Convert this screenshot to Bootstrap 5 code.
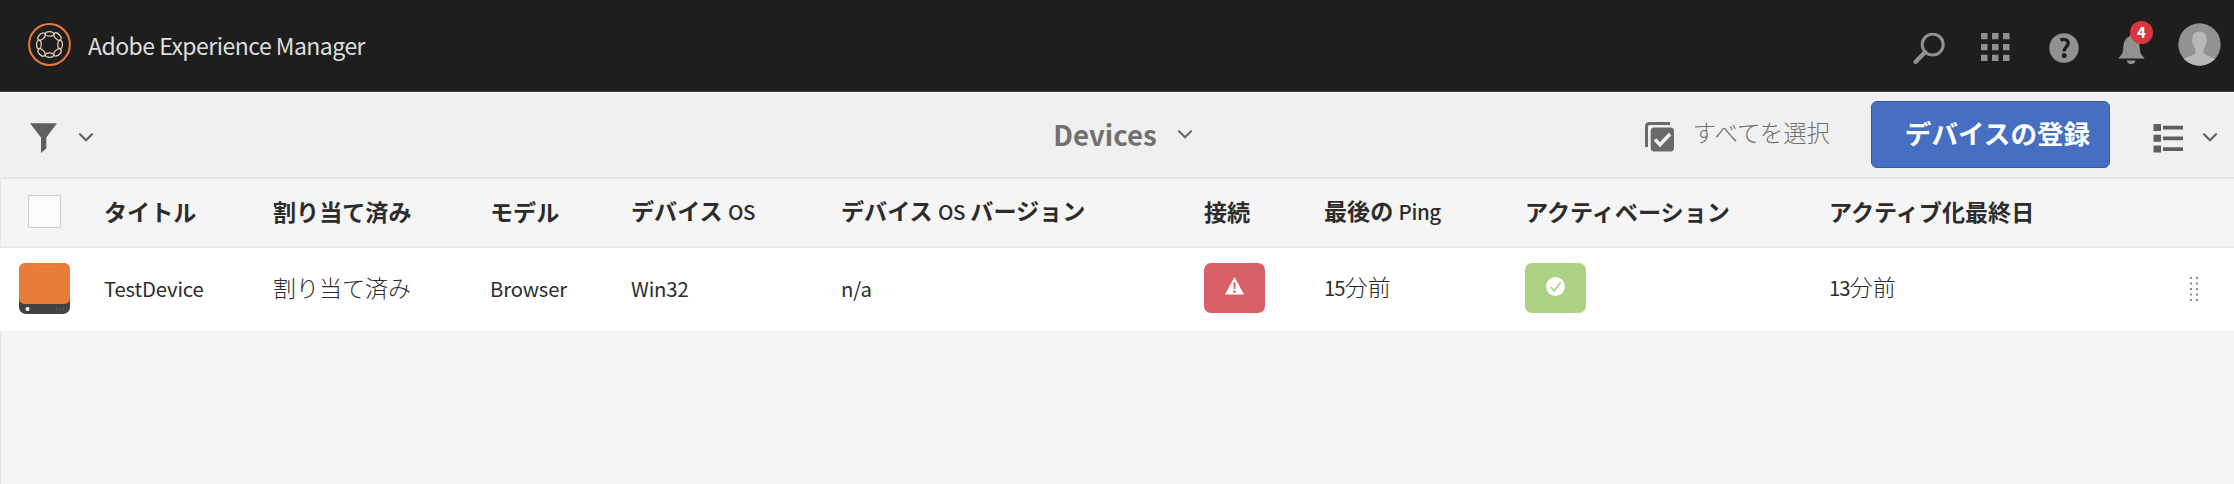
<!DOCTYPE html>
<html lang="ja">
<head>
<meta charset="utf-8">
<meta name="viewport" content="width=device-width, initial-scale=1">
<title>Adobe Experience Manager - Devices</title>
<link href="https://cdn.jsdelivr.net/npm/bootstrap@5.3.0/dist/css/bootstrap.min.css" rel="stylesheet">
<style>
body{font-family:"Noto Sans CJK JP",sans-serif;font-size:23px;line-height:34px;background:#f5f5f5;color:#2c2c2c;height:484px;overflow:hidden}
svg{display:block;flex:none}
.shell-bar{height:93px;background:#1e1e1e;border-bottom:1px solid #fff;box-shadow:inset 0 -1px #3a3a3a;padding:0 13px 0 28px}
.shell-title{font-size:23px;color:#dedede;margin:-2px 0 0 17px;letter-spacing:-.52px;white-space:nowrap}
.shell-tools{color:#919191}
.count-badge{left:12px;top:-6px;width:23px;height:23px;background:#d7373f;font-size:15px;line-height:22px;padding:0;font-weight:700}
.action-bar{height:86px;background:#f0f0f0;border-bottom:2px solid #e5e5e5;color:#5f5f5f}
.bar-side{flex:1 1 0}
.page-title{font-size:27.6px;font-weight:700;color:#707070;line-height:40px;margin-top:-2px}
.select-all{font-size:23.4px;font-weight:300;color:#707070;white-space:nowrap;margin:-6px 41px 0 0}
.btn-register{width:239px;height:67px;margin:-2px 43px 0 0;background:#466ec1;border:1px solid #2f5bb8;border-radius:6px;color:#fff;font-size:26.6px;font-weight:700;line-height:40px;padding:0 0 2px 14px;white-space:nowrap}
.device-table{table-layout:fixed;width:2234px;margin:0 0 0 -1px;white-space:nowrap}
.device-table th,.device-table td{padding:0;vertical-align:middle}
.device-table thead tr{height:68px}
.device-table th{font-size:23.1px;font-weight:700;border-bottom:2px solid #e9e9e9;padding-bottom:4px}
.device-table tbody tr{height:84px}
.device-table td{background:#fff;padding-bottom:4px}
.device-table .jp-light{font-weight:300;padding-bottom:6px}
.latin{font-size:20.3px;letter-spacing:-.15px}
th .latin{font-size:20.5px;letter-spacing:-.4px;font-weight:500}
.jp-light .latin{font-weight:400;letter-spacing:-.9px}
.check-all{width:33px;height:33px;border:1px solid #cfcfcf;background:#fbfbfb;margin:2px 0 0 28px}
.status-tag{width:61px;height:50px;border-radius:7px;padding-bottom:3px;margin-left:-.5px}
.status-alert{background:#d96066}
.status-ok{background:#aed082}
.list-area{border-left:1px solid #e6e6e6;height:305px}
</style>
</head>
<body>
<header class="shell-bar d-flex align-items-center">
  <svg width="43" height="43" viewBox="-21.5 -21.5 43 43" fill="none" style="margin-top:-3px">
    <circle r="20.4" stroke="#e87b3c" stroke-width="2"/>
    <g stroke="#e6cdbd" stroke-width="1.3">
      <ellipse cy="-10.6" rx="4.2" ry="2.3"/>
      <ellipse cy="-11.3" rx="4.4" ry="2.6" transform="rotate(45)"/>
      <ellipse cy="-10.6" rx="4.2" ry="2.3" transform="rotate(90)"/>
      <ellipse cy="-11.3" rx="4.4" ry="2.6" transform="rotate(135)"/>
      <ellipse cy="-10.6" rx="4.2" ry="2.3" transform="rotate(180)"/>
      <ellipse cy="-11.3" rx="4.4" ry="2.6" transform="rotate(225)"/>
      <ellipse cy="-10.6" rx="4.2" ry="2.3" transform="rotate(270)"/>
      <ellipse cy="-11.3" rx="4.4" ry="2.6" transform="rotate(315)"/>
    </g>
  </svg>
  <span class="shell-title">Adobe Experience Manager</span>
  <div class="shell-tools d-flex align-items-center ms-auto">
    <svg width="32" height="32" viewBox="0 0 32 32" fill="none" stroke="currentColor" style="margin:5px 36px 0 0"><circle cx="19.7" cy="11.6" r="10.5" stroke-width="3"/><path d="M12 19.2 2.7 28.8" stroke-width="4.4" stroke-linecap="round"/></svg>
    <svg width="30" height="30" viewBox="0 0 30 30" fill="currentColor" style="margin:2px 38px 0 0"><path d="M0 1h6.500v6.300H0zM11 1h6.500v6.300H11zM22 1h6.500v6.300H22zM0 12h6.500v6.300H0zM11 12h6.500v6.300H11zM22 12h6.500v6.300H22zM0 22.700h6.500V29H0zM11 22.700h6.500V29H11zM22 22.700h6.500V29H22z"/></svg>
    <svg width="30" height="30" viewBox="0 0 30 30" style="margin:4px 39px 0 0"><circle cx="15" cy="15" r="14.700" fill="currentColor"/><path d="M11.500 7.300c3-1.700 8-.9 7.700 3.100-.2 3.300-4.200 4.100-4 8" fill="none" stroke="#1e1e1e" stroke-width="3.300"/><circle cx="15.200" cy="22.600" r="2.500" fill="#1e1e1e"/></svg>
    <div class="position-relative" style="margin:0 33px 0 0">
      <svg width="27" height="30" viewBox="0 0 27 30" fill="currentColor" style="margin-top:8px"><path d="M.3 23.500c0-1.500 4.500-2.800 4.800-9C5.400 6.500 8 2.300 11 2.100c0-2.700 5-2.700 5 0 3 .2 5.600 4.400 5.900 12.400.3 6.200 4.800 7.500 4.800 9zM8.800 25.500h8.700c-.9 5-7.800 5-8.700 0z"/></svg>
      <span class="count-badge badge rounded-pill position-absolute">4</span>
    </div>
    <svg width="43" height="43" viewBox="0 0 43 43" style="margin-top:-3px"><defs><clipPath id="avatar"><circle cx="21.500" cy="21.500" r="21.200"/></clipPath></defs><g clip-path="url(#avatar)"><path fill="#929292" d="M0 0h43v43H0z"/><path fill="#b8b8b8" d="M21.500 8.500c5 0 7.500 3.600 7 8 1 .3.700 3.500-.7 4.300-.6 2.400-1.300 4-2.300 5v3.500c.8 3.400 7 4 11.500 6.500V43H5.500v-7.200C10 33.300 16.700 32.700 17.500 29.300v-3.500c-1-1-1.700-2.600-2.300-5-1.400-.8-1.700-4-.7-4.300-.5-4.400 2-8 7-8z"/></g></svg>
  </div>
</header>
<nav class="action-bar d-flex align-items-center">
  <div class="bar-side d-flex align-items-center">
    <svg width="27" height="30" viewBox="0 0 27 30" fill="currentColor" style="margin:6px 22px 0 30px"><path d="M0 .3h27L16.300 14.500v11L11 30V14.500z"/></svg>
    <svg width="14" height="9" viewBox="0 0 14 9" fill="none" stroke="currentColor" stroke-width="2.200" stroke-linecap="round" style="margin-top:5px"><path d="m1 1.300 6 6 6-6"/></svg>
  </div>
  <div class="d-flex align-items-center" style="padding-left:11px">
    <span class="page-title">Devices</span>
    <svg width="14" height="9" viewBox="0 0 14 9" fill="none" stroke="#6a6a6a" stroke-width="2.200" stroke-linecap="round" style="margin:0 0 1px 21px"><path d="m1 1.300 6 6 6-6"/></svg>
  </div>
  <div class="bar-side d-flex align-items-center justify-content-end">
    <svg width="29" height="30" viewBox="0 0 29 30" style="margin:4px 19px 0 0"><path d="M1.500 25V4.500q0-3 3-3H25" fill="none" stroke="#6a6a6a" stroke-width="3"/><rect x="5.700" y="5.500" width="23.300" height="24" rx="3.500" fill="#6a6a6a"/><path d="m10 17.500 5 5.300L25 12" fill="none" stroke="#f2f2f2" stroke-width="3.500"/></svg>
    <span class="select-all">すべてを選択</span>
    <button class="btn btn-register">デバイスの登録</button>
    <svg width="30" height="30" viewBox="0 0 30 30" fill="currentColor" style="margin:6px 20px 0 0"><path d="M.5 1H8v7H.5zM10 2.800h20v3.700H10zM.5 11.800H8v7H.5zM10 13.500h20v3.700H10zM.5 22.500H8v7H.5zM10 24.300h20V28H10z"/></svg>
    <svg width="14" height="9" viewBox="0 0 14 9" fill="none" stroke="currentColor" stroke-width="2.200" stroke-linecap="round" style="margin:5px 17px 0 0"><path d="m1 1.300 6 6 6-6"/></svg>
  </div>
</nav>
<main class="list-area">
<table class="device-table">
  <colgroup><col style="width:104px"><col style="width:169px"><col style="width:217px"><col style="width:141px"><col style="width:210px"><col style="width:363px"><col style="width:120px"><col style="width:201px"><col style="width:304px"><col style="width:361px"><col></colgroup>
  <thead>
    <tr><th><div class="check-all"></div></th><th>タイトル</th><th>割り当て済み</th><th>モデル</th><th>デバイス <span class="latin">OS</span></th><th>デバイス <span class="latin">OS</span> バージョン</th><th>接続</th><th>最後の <span class="latin">Ping</span></th><th>アクティベーション</th><th>アクティブ化最終日</th><th></th></tr>
  </thead>
  <tbody>
    <tr>
      <td><svg width="51" height="51" viewBox="0 0 51 51" style="margin:1px 0 0 19px"><rect width="51" height="51" rx="7" fill="#424242"/><path d="M0 7q0-7 7-7h37q7 0 7 7v28q0 6-7 6H7q-7 0-7-6z" fill="#ea7c3a"/><path d="M17 4h3M24 4h10" stroke="#f08c3c"/><circle cx="8.500" cy="46" r="2" fill="#fff"/><path d="M37 46h1M40.500 46h1M44 46h1" stroke="#5a5a5a" stroke-width="3"/></svg></td>
      <td class="latin">TestDevice</td><td class="jp-light">割り当て済み</td><td class="latin">Browser</td><td class="latin">Win32</td><td class="latin">n/a</td>
      <td><div class="status-tag status-alert d-flex align-items-center justify-content-center"><svg width="19" height="18" viewBox="0 0 19 18"><path d="M9.500 0 19 17.500H0z" fill="#fff"/><path d="M8.300 5.500h2.400l-.4 6.500H8.700zM8.300 13.500h2.400v2.300H8.300z" fill="#d96066"/></svg></div></td>
      <td class="jp-light"><span class="latin">15</span>分前</td>
      <td><div class="status-tag status-ok d-flex align-items-center justify-content-center"><svg width="19" height="19" viewBox="0 0 19 19"><circle cx="9.500" cy="9.500" r="9.400" fill="#fff"/><path d="m4.700 10 3.500 3.800 6.500-8.300" fill="none" stroke="#aed082" stroke-width="1.800"/></svg></div></td>
      <td class="jp-light"><span class="latin">13</span>分前</td>
      <td><svg width="9" height="25" viewBox="0 0 9 25" fill="#8c8c8c" style="margin-top:4px"><path d="M0 0h2v2H0zM6 0h2v2H6zM0 5.500h2v2H0zM6 5.500h2v2H6zM0 11h2v2H0zM6 11h2v2H6zM0 16.500h2v2H0zM6 16.500h2v2H6zM0 22h2v2H0zM6 22h2v2H6z"/></svg></td>
    </tr>
  </tbody>
</table>
</main>
<script src="https://cdn.jsdelivr.net/npm/bootstrap@5.3.0/dist/js/bootstrap.bundle.min.js"></script>
</body>
</html>
